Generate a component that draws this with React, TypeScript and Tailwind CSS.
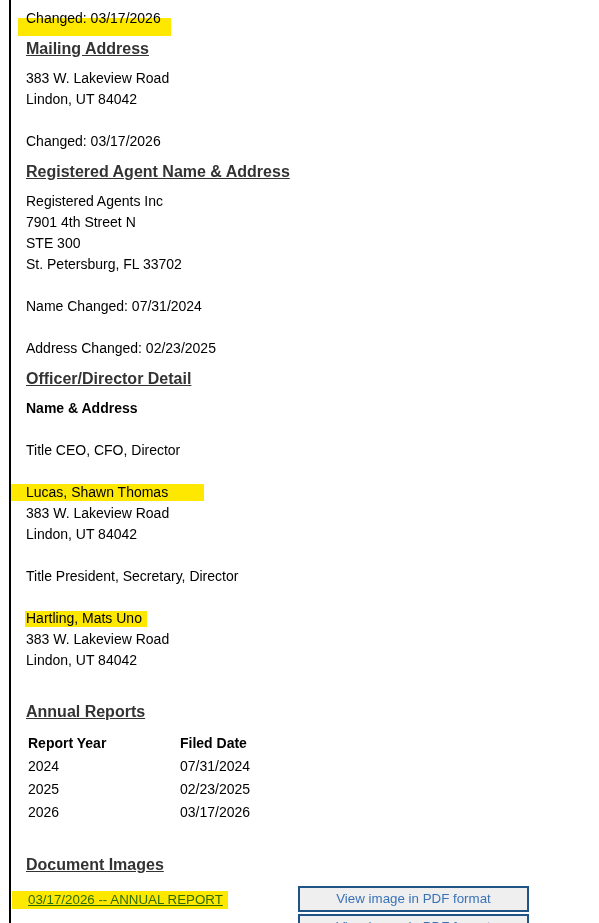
import React from "react";

/* ─── Data ─── */
const officers = [
  { title: "Title CEO, CFO, Director", name: "Lucas, Shawn Thomas" },
  { title: "Title President, Secretary, Director", name: "Hartling, Mats Uno" },
];

const reports = [
  { year: "2024", filed: "07/31/2024" },
  { year: "2025", filed: "02/23/2025" },
  { year: "2026", filed: "03/17/2026" },
];

const documents = [
  { label: "03/17/2026 -- ANNUAL REPORT" },
  { label: "10/11/2025 -- Amendment" },
];

/* ─── Bits ─── */
function Line({ children, bold }: { children?: React.ReactNode; bold?: boolean }) {
  return (
    <div className={`h-[21px] leading-[21px] whitespace-nowrap ${bold ? "font-bold" : ""}`}>
      {children ?? "\u00a0"}
    </div>
  );
}

function Heading({ children }: { children: React.ReactNode }) {
  return (
    <div className="h-[39px] pt-[10px] text-[16px] leading-[19px] font-bold text-[#333] whitespace-nowrap">
      <span className="underline">{children}</span>
    </div>
  );
}

function Highlight({ className }: { className: string }) {
  return (
    <div className={`absolute bg-[#ffe800] mix-blend-multiply pointer-events-none ${className}`} />
  );
}

export default function App() {
  return (
    <div className="relative h-[923px] overflow-hidden bg-white text-black text-[14px] font-['Liberation_Sans',Arial,sans-serif]">
      <div className="ml-[9px] border-l-2 border-black min-h-screen pl-[15px] pt-[7.5px]">
        <Line>Changed: 03/17/2026</Line>

        <Heading>Mailing Address</Heading>
        <Line>383 W. Lakeview Road</Line>
        <Line>Lindon, UT 84042</Line>
        <Line />
        <Line>Changed: 03/17/2026</Line>

        <Heading>Registered Agent Name &amp; Address</Heading>
        <Line>Registered Agents Inc</Line>
        <Line>7901 4th Street N</Line>
        <Line>STE 300</Line>
        <Line>St. Petersburg, FL 33702</Line>
        <Line />
        <Line>Name Changed: 07/31/2024</Line>
        <Line />
        <Line>Address Changed: 02/23/2025</Line>

        <Heading>Officer/Director Detail</Heading>
        <Line bold>Name &amp; Address</Line>
        {officers.map((o) => (
          <div key={o.name}>
            <Line />
            <Line>{o.title}</Line>
            <Line />
            <Line>{o.name}</Line>
            <Line>383 W. Lakeview Road</Line>
            <Line>Lindon, UT 84042</Line>
          </div>
        ))}
        <Line />

        <Heading>Annual Reports</Heading>
        <table className="border-collapse mt-[1px]">
          <tbody>
            <tr className="h-[23px]">
              <td className="w-[152px] px-[2px] font-bold">Report Year</td>
              <td className="px-[2px] font-bold">Filed Date</td>
            </tr>
            {reports.map((r) => (
              <tr key={r.year} className="h-[23px]">
                <td className="px-[2px]">{r.year}</td>
                <td className="px-[2px]">{r.filed}</td>
              </tr>
            ))}
          </tbody>
        </table>
        <Line />

        <Heading>Document Images</Heading>
        {documents.map((d) => (
          <div key={d.label} className="flex items-center h-[28px] pt-[2px]">
            <div className="w-[272px] pl-[2px] pt-[1px]">
              <a href="#" className="text-[#2f78c8] text-[13.333px] underline whitespace-nowrap">
                {d.label}
              </a>
            </div>
            <button className="w-[231px] h-[26px] bg-[#efefef] border-2 border-[#1f5585] text-[#3a72b8] text-[13.333px] leading-[20px]">
              View image in PDF format
            </button>
          </div>
        ))}
      </div>

      {/* Yellow marker annotations */}
      <Highlight className="left-[18px] top-[18px] w-[153px] h-[18px]" />
      <Highlight className="left-[9px] top-[484px] w-[195px] h-[17px]" />
      <Highlight className="left-[25px] top-[611px] w-[122px] h-[16px]" />
      <Highlight className="left-[12px] top-[891px] w-[216px] h-[18px]" />
    </div>
  );
}
